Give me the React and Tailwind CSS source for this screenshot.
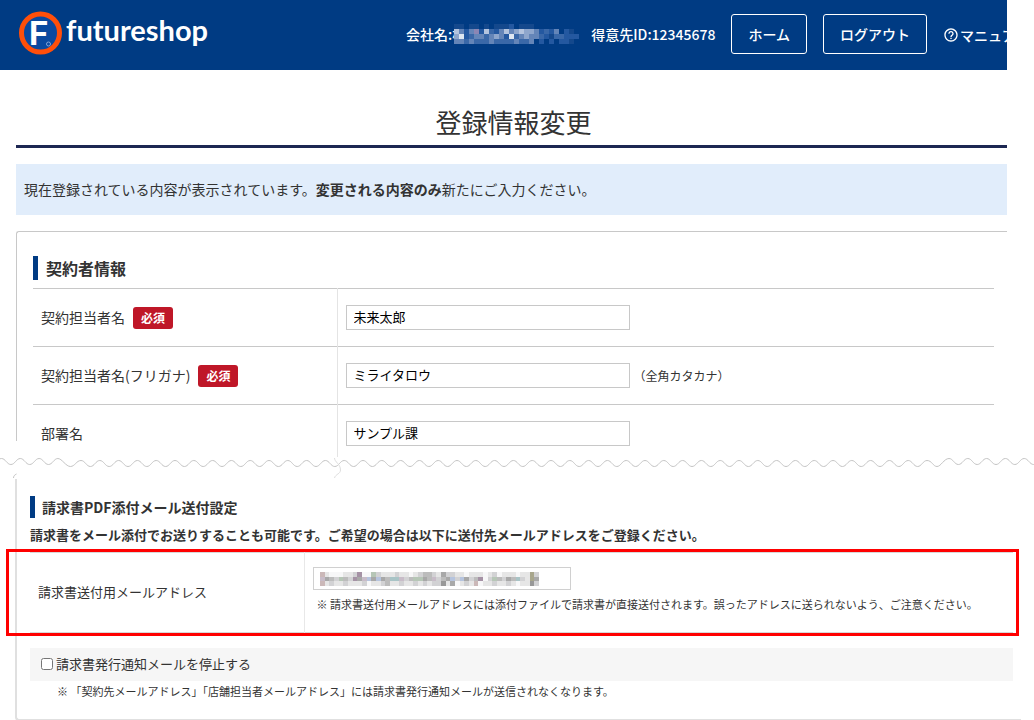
import { MdHelpOutline } from 'react-icons/md';

const nameColors = {
  '.': '#003b83',
  a: '#14488c',
  b: '#2458a0',
  c: '#3a68a8',
  d: '#6485b8',
  e: '#8ea6cc',
  f: '#b4c4de',
  g: '#dfe7f1',
  p: '#8b86b4',
};

const nameRows = [
  'aa.aa.a.aaab.aaa.........',
  'fdbdpbfcbdfdefeedbcbd.ba.',
  'egbcddcdedbgcdeddcbaccbbb',
  'ddcdcccdccccdccd.b.b.bba.',
];

const mailColors = {
  '.': '#f7f7f8',
  a: '#e6e6e6',
  b: '#d2d2d4',
  c: '#bcbcbc',
  d: '#a8a8a8',
  e: '#989898',
  p: '#c8bcc8',
  q: '#a592a5',
  t: '#a9c4c6',
  u: '#b6c4de',
  g: '#b6c6b6',
  r: '#cbb8b8',
  y: '#a8a68c',
};

const mailRows = [
  'ra...aabq..gbaaabaa.abccbadbbaa.aaa.ab.aaa.aayb',
  'pdcbgcbqdpududcttpbcggdcpbcdubudbcq.bgcbdctbayd',
  'rabaabaaab.aabcaabaabababbead.abar.aabaaba.aaeb',
];

const fields = [
  { id: 'name', label: '契約担当者名', required: true, value: '未来太郎' },
  { id: 'kana', label: '契約担当者名(フリガナ)', required: true, value: 'ミライタロウ', note: '（全角カタカナ）' },
  { id: 'dept', label: '部署名', value: 'サンプル課' },
];

const Mosaic = ({ rows, colors, className }) => (
  <svg
    className={className}
    viewBox={`0 0 ${rows[0].length} ${rows.length}`}
    preserveAspectRatio="none"
    shapeRendering="crispEdges"
    aria-hidden="true"
  >
    {rows.map((row, y) =>
      [...row].map((c, x) => <rect key={`${x}-${y}`} x={x} y={y} width="1" height="1" fill={colors[c]} />)
    )}
  </svg>
);

const Logo = () => (
  <a href="#top" className="flex items-center gap-1 pb-0.5 text-white">
    <svg className="h-11 w-11" viewBox="0 0 44 44">
      <circle cx="22.5" cy="22" r="19" fill="#0a49a0" stroke="#ff4f0a" strokeWidth="5" />
      <text x="11" y="34" fontSize="33" fontWeight="700" fontFamily="Inter, sans-serif" fill="#fff">F</text>
      <circle cx="30.5" cy="33" r="2" fill="none" stroke="#7fa3da" />
    </svg>
    <span className="pb-1.5 font-['Lato',sans-serif] text-[29px] leading-8 font-bold">futureshop</span>
  </a>
);

const Header = () => (
  <header className="flex h-[70px] items-center gap-4 overflow-hidden bg-[#003b83] pb-0.5 pl-[18px] text-sm font-medium whitespace-nowrap text-white">
    <Logo />
    <div className="ml-auto flex items-center">
      <span>会社名:株</span>
      <Mosaic rows={nameRows} colors={nameColors} className="-mr-1 -ml-3 h-5 w-[125px]" />
    </div>
    <span>得意先ID:12345678</span>
    <a href="#home" className="rounded-[3px] border border-white px-4 py-2 leading-[22px]">ホーム</a>
    <button type="button" className="rounded-[3px] border border-white px-4 py-2 leading-[22px]">ログアウト</button>
    <a href="#manual" className="flex w-16 shrink-0 items-center gap-px pt-0.5">
      <MdHelpOutline className="h-4 w-4 shrink-0" />
      マニュアル
    </a>
  </header>
);

// peaks every 18.8px, the two ends sit a little higher than the middle
const wavePath = (start, end, y) => {
  let d = `M${start} ${y}`;
  for (let x = start; x < end; x += 18.8) {
    d += 'c4 0 5.4 6 9.4 6s5.4 -6 9.4 -6';
  }
  return d;
};

const TornEdge = () => (
  <svg className="relative -mt-4 block h-[38px] w-full" fill="none" stroke="#c4c4c4" aria-hidden="true">
    <rect x="14" y="0" width="4" height="17" fill="#fff" stroke="none" />
    <path d={wavePath(-17.3, 57, 17.5)} />
    <path d="M57.9 17.5c4 0 8 8 12.5 8s6 -6 10.6 -6" />
    <path d={wavePath(81, 925, 19.5)} />
    <path d="M927 19.5c5 0 6 6 10 6s7 -8 12 -8" />
    <path d={wavePath(949, 1800, 17.5)} />
    <path d="M16.5 33c-2 1 -3 2 -3 4" />
    <path d="M334.5 17c0 4 6 6 6 12c0 4 -5 4 -6 8" stroke="#dedede" />
  </svg>
);

const SectionTitle = ({ className, children }) => (
  <h2 className={`border-l-[5px] border-[#003b83] font-bold ${className}`}>{children}</h2>
);

const ContractSection = () => (
  <section className="ml-4 rounded-tl-[3px] border-t border-l border-[#c8c8c8] pt-6 pr-[13px] pl-4">
    <SectionTitle className="mb-2 pl-2 text-base leading-6">契約者情報</SectionTitle>
    <table className="w-full table-fixed border-collapse text-sm">
      <tbody>
        {fields.map((f) => (
          <tr key={f.id} className="h-[58px] border-t border-[#c8c8c8] last:h-[52px]">
            <th scope="row" className="w-[304px] border-r border-[#e4e4e4] px-2 py-0 pt-4 text-left align-top font-normal">
              <div className="flex items-end gap-2">
                <label htmlFor={f.id} className="leading-6">{f.label}</label>
                {f.required && (
                  <span className="rounded-[3px] bg-[#bf1728] px-2 text-xs leading-[22px] font-bold text-white">必須</span>
                )}
              </div>
            </th>
            <td className="px-2 pt-4 align-top">
              <div className="flex items-center gap-1">
                <input
                  id={f.id}
                  type="text"
                  defaultValue={f.value}
                  className="h-[25px] w-[284px] border border-[#c8c8c8] bg-white px-[7px] pb-0.5 text-[13px] text-black"
                />
                {f.note && <span className="text-xs">{f.note}</span>}
              </div>
            </td>
          </tr>
        ))}
      </tbody>
    </table>
  </section>
);

const InvoiceMailSection = () => (
  <section className="mr-[-14px] ml-[15px] rounded-bl-[4px] border-b-2 border-l-2 border-[#e0e0e0] pt-[17px] pr-2 pb-5 pl-[13px]">
    <SectionTitle className="pl-[7px] text-sm leading-[22px]">請求書PDF添付メール送付設定</SectionTitle>
    <p className="my-2 text-[13px] leading-[18px] font-bold">
      請求書をメール添付でお送りすることも可能です。ご希望の場合は以下に送付先メールアドレスをご登録ください。
    </p>
    <div className="relative">
      <table className="w-full table-fixed border-collapse">
        <tbody>
          <tr className="h-20 border-y border-[#d8d8d8]">
            <th scope="row" className="w-[274px] border-r border-[#e8e8e8] px-2 text-left text-[13px] font-normal">
              <label htmlFor="invoice-mail">請求書送付用メールアドレス</label>
            </th>
            <td className="px-2 pt-[14px] align-top">
              <div className="relative">
                <input id="invoice-mail" type="email" className="block h-[23px] w-[258px] border border-[#d0d0d0] bg-white px-[7px] text-xs" />
                <Mosaic rows={mailRows} colors={mailColors} className="absolute top-[5px] left-[7px] h-[14px] w-[219px]" />
              </div>
              <p className="mt-[6px] pl-1 text-[11px] leading-4">
                ※ 請求書送付用メールアドレスには添付ファイルで請求書が直接送付されます。誤ったアドレスに送られないよう、ご注意ください。
              </p>
            </td>
          </tr>
        </tbody>
      </table>
      <div className="pointer-events-none absolute -top-[3px] -right-[6px] -bottom-[3px] -left-6 border-[3px] border-[#ff0000]" />
    </div>
    <div className="mt-[15px] flex h-[33px] items-center gap-[3px] bg-[#f6f6f6] pl-[11px] text-[13px]">
      <input id="stop-mail" type="checkbox" className="h-3 w-3" />
      <label htmlFor="stop-mail">請求書発行通知メールを停止する</label>
    </div>
    <p className="mt-[2px] pl-[27px] text-[11px] leading-4">
      ※ 「契約先メールアドレス」「店舗担当者メールアドレス」には請求書発行通知メールが送信されなくなります。
    </p>
  </section>
);

const App = () => {
  return (
    <div id="top" className="overflow-x-hidden bg-white font-['Noto_Sans_CJK_JP',sans-serif] text-[#333]">
      <div className="mr-[27px]">
        <Header />
        <main>
          <h1 className="ml-4 border-b-[3px] border-[#1d2752] pt-[33px] pb-1 pl-1 text-center text-[26px] leading-[38px]">
            登録情報変更
          </h1>
          <p className="my-4 ml-4 bg-[#e1edfb] p-2 text-sm leading-[35px]">
            現在登録されている内容が表示されています。<b>変更される内容のみ</b>新たにご入力ください。
          </p>
          <ContractSection />
          <div className="mr-[-27px]">
            <TornEdge />
          </div>
          <InvoiceMailSection />
        </main>
      </div>
    </div>
  );
};

export default App;
